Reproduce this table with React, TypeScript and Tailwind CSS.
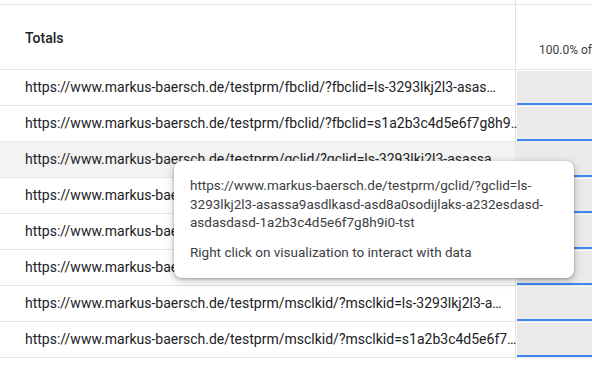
import React from 'react';

const rows = [
  'https://www.markus-baersch.de/testprm/fbclid/?fbclid=ls-3293lkj2l3-asas…',
  'https://www.markus-baersch.de/testprm/fbclid/?fbclid=s1a2b3c4d5e6f7g8h9…',
  'https://www.markus-baersch.de/testprm/gclid/?gclid=ls-3293lkj2l3-asassa…',
  'https://www.markus-baersch.de/testprm/gclid/?gclid=s1a2b3c4d5e6f7g8h9i…',
  'https://www.markus-baersch.de/testprm/dclid/?dclid=ls-3293lkj2l3-asass…',
  'https://www.markus-baersch.de/testprm/dclid/?dclid=s1a2b3c4d5e6f7g8h9…',
  'https://www.markus-baersch.de/testprm/msclkid/?msclkid=ls-3293lkj2l3-a…',
  'https://www.markus-baersch.de/testprm/msclkid/?msclkid=s1a2b3c4d5e6f7…',
];

export default function App() {
  return (
    <div className="relative w-[592px] h-[376px] overflow-hidden bg-white font-['Roboto',sans-serif]">
      {/* Scrolled-off top */}
      <div className="grid grid-cols-[516px_200px] h-[5px] border-b border-[#e6e6e6]">
        <div className="border-r border-[#e3e3e3]" />
        <div />
      </div>

      {/* Header */}
      <div className="grid grid-cols-[516px_200px] h-[65px] border-b border-[#e6e6e6]">
        <div className="flex items-center pl-[25px] pt-[3px] border-r border-[#e3e3e3] text-[14px] font-medium text-[#202124]">
          Totals
        </div>
        <div className="flex items-end pl-[23px] pb-[10px] text-[12px] text-[#3c4043] whitespace-nowrap">
          100.0% of total
        </div>
      </div>

      {/* Rows */}
      {rows.map((url, i) => (
        <div
          key={i}
          className={`grid grid-cols-[516px_200px] h-[36px] border-b border-[#e6e6e6] ${i === 2 ? 'bg-[#f3f3f3]' : 'bg-white'}`}
        >
          <div className="flex items-center pl-[25px] border-r border-[#e3e3e3] text-[14px] text-[#202124] whitespace-nowrap">
            {url}
          </div>
          <div className="pl-[1px] pt-[1px]">
            <div className="h-[34px] bg-[#ebebeb] border-b-2 border-[#4285f4]" />
          </div>
        </div>
      ))}

      {/* Tooltip */}
      <div className="absolute left-[174px] top-[161px] w-[400px] h-[117px] rounded-lg bg-white px-[16px] pt-[15px] text-[13.5px] leading-[18.5px] text-[#3c4043] shadow-[0_1px_3px_rgba(0,0,0,0.3),0_3px_8px_2px_rgba(0,0,0,0.15)]">
        <p className="break-words">
          https://www.markus-baersch.de/testprm/gclid/?gclid=ls-3293lkj2l3-asassa9asdlkasd-asd8a0sodijlaks-a232esdasd-asdasdasd-1a2b3c4d5e6f7g8h9i0-tst
        </p>
        <p className="mt-[11px]">Right click on visualization to interact with data</p>
      </div>
    </div>
  );
}
